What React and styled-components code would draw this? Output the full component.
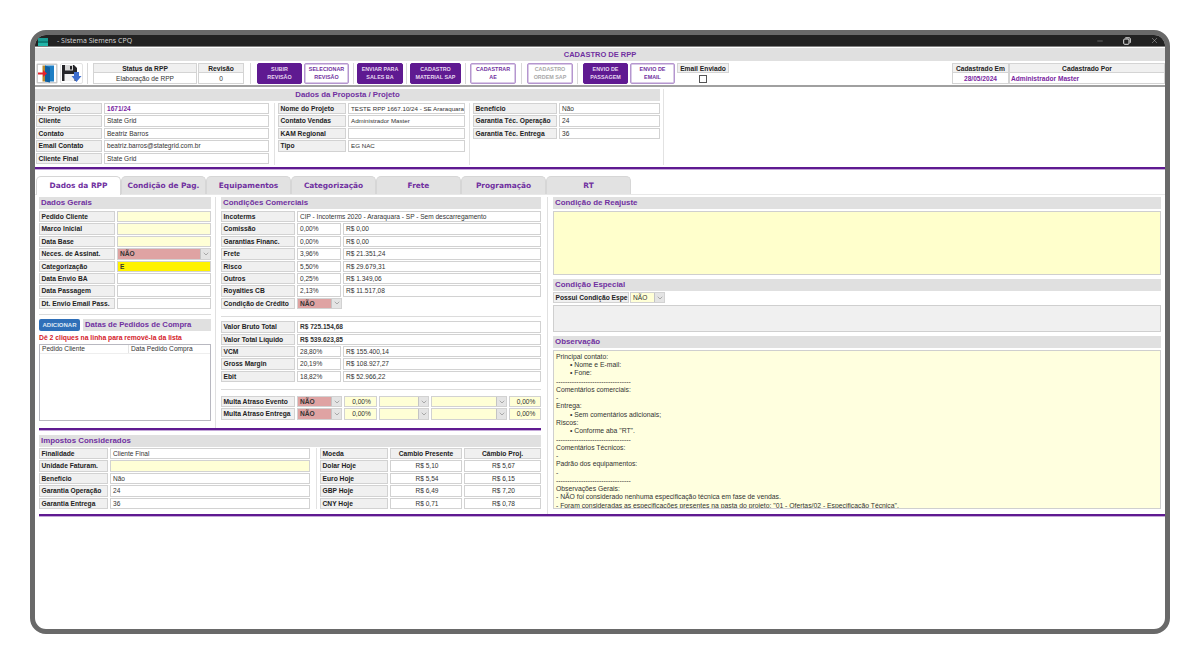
import React from 'react';
import styled, { createGlobalStyle } from 'styled-components';
import { ChevronDown, Minus, X } from 'lucide-react';

const GlobalStyle = createGlobalStyle`
  html, body {
    margin: 0;
    background: #fff;
    font-family: "Liberation Sans", Arial, sans-serif;
  }
  * { box-sizing: border-box; }
`;

const PURPLE = '#5f1a91';
const TITLE = '#7030a0';

const Page = styled.div`
  width: 1200px;
  height: 664px;
  padding: 30px;
  overflow: hidden;
`;

const Frame = styled.div`
  width: 1140px;
  height: 604px;
  border: 5px solid #696969;
  border-radius: 16px;
  overflow: hidden;
  background: #fff;
`;

const TitleBar = styled.div`
  height: 12px;
  background: #222;
  border-bottom: 1px solid #808080;
  display: flex;
  align-items: center;
  padding: 0 6px 0 3px;
  color: #d8d8d8;
  font-family: "Open Sans", sans-serif;
  font-size: 7px;
`;

const AppLogo = styled.div`
  width: 10px;
  height: 8px;
  margin-right: 9px;
  margin-top: 3px;
  background: linear-gradient(#1a9c94 0 40%, #0d7f78 40% 60%, #22b5a8 60%);
`;

const WindowControls = styled.div`
  margin-left: auto;
  display: flex;
  align-items: center;
  gap: 19px;
  color: #e4e4e4;
`;

const PageTitle = styled.div`
  height: 13px;
  margin-top: 1px;
  background: #e0e0e0;
  color: ${TITLE};
  font-size: 7.5px;
  font-weight: bold;
  text-align: center;
  line-height: 14px;
`;

const Toolbar = styled.div`
  height: 26px;
  display: flex;
  align-items: flex-start;
  padding: 2px 0 0 1px;
  border-bottom: 2px solid #a0a0a0;
`;

const IconButton = styled.div`
  width: ${(p) => p.$w}px;
  height: 21px;
  margin-right: 2px;
  border: 1px solid #e4e4e4;
  border-radius: 2px;
  display: flex;
  align-items: center;
  justify-content: center;
`;

const ToolDivider = styled.div`
  width: 1px;
  height: 21px;
  background: #d8d8d8;
  margin: 0 ${(p) => p.$r}px 0 ${(p) => p.$l}px;
`;

const InfoCell = styled.div`
  width: ${(p) => p.$w}px;
  margin-right: ${(p) => p.$mr || 0}px;
  margin-left: ${(p) => (p.$push ? 'auto' : 0)};
  flex: none;
`;

const InfoHead = styled.div`
  height: 10px;
  background: #f0f0f0;
  border: 1px solid #d4d4d4;
  font-size: 6.7px;
  font-weight: bold;
  line-height: 9px;
  text-align: center;
  color: #222;
`;

const InfoValue = styled.div`
  height: 11px;
  border: 1px solid #d4d4d4;
  border-top: 0;
  font-size: 6.6px;
  line-height: 11px;
  text-align: ${(p) => p.$align || 'center'};
  padding-left: ${(p) => (p.$align ? 1 : 0)}px;
  font-weight: ${(p) => (p.$strong ? 'bold' : 'normal')};
  color: ${(p) => (p.$strong ? '#7a1fa2' : '#333')};
`;

const CheckRow = styled.div`
  height: 11px;
  display: flex;
  align-items: center;
  justify-content: center;
`;

const CheckBox = styled.div`
  width: 8px;
  height: 8px;
  border: 1px solid #555;
  background: #fff;
`;

const ActionButton = styled.div`
  width: ${(p) => p.$w}px;
  height: 21px;
  flex: none;
  margin-right: ${(p) => p.$mr || 0}px;
  border-radius: 2px;
  border: 1px solid ${(p) => (p.$solid ? PURPLE : '#b596cf')};
  box-shadow: ${(p) => (p.$solid ? 'none' : 'inset 0 0 0 0.5px #b596cf')};
  background: ${(p) => (p.$solid ? PURPLE : '#fff')};
  color: ${(p) => (p.$solid ? '#e6d8f0' : p.$off ? '#a8a8a8' : TITLE)};
  font-size: 5.4px;
  font-weight: bold;
  line-height: 7.5px;
  text-align: center;
  display: flex;
  align-items: center;
  justify-content: center;
`;

const ProjectArea = styled.div`
  height: 80px;
  display: flex;
  padding-top: 2px;
`;

const ProjectLeft = styled.div`
  width: 625px;
  height: 76px;
`;

const Band = styled.div`
  height: 12px;
  margin-top: ${(p) => p.$mt || 0}px;
  background: #e0e0e0;
  color: ${TITLE};
  font-size: ${(p) => p.$size || 7.9}px;
  font-weight: bold;
  line-height: 12.5px;
  padding-left: ${(p) => (p.$center ? 0 : 2)}px;
  text-align: ${(p) => (p.$center ? 'center' : 'left')};
  flex: ${(p) => (p.$grow ? 1 : 'none')};
`;

const ProjectCols = styled.div`
  display: flex;
  margin-top: 2px;
  height: 62px;
`;

const Column = styled.div`
  width: ${(p) => p.$w}px;
  flex: none;
  display: flex;
  flex-direction: column;
  gap: 1px;
  ${(p) => (p.$rule ? 'border-right: 1px solid #e2e2e2;' : '')}
  ${(p) => (p.$pr ? `padding-right: ${p.$pr}px;` : '')}
  ${(p) => (p.$pl ? `padding-left: ${p.$pl}px;` : '')}
`;

const SideRule = styled.div`
  width: 1px;
  height: 76px;
  margin-left: 3px;
  background: #e2e2e2;
`;

const Row = styled.div`
  height: 11.4px;
  display: flex;
  gap: ${(p) => (p.$tight ? 1 : 2)}px;
  flex: none;
`;

const Label = styled.div`
  width: ${(p) => p.$w}px;
  flex: none;
  background: #f0f0f0;
  border: 1px solid #d2d2d2;
  font-size: 6.7px;
  font-weight: bold;
  color: #222;
  line-height: 10px;
  padding-left: ${(p) => (p.$center ? 0 : 1.5)}px;
  text-align: ${(p) => (p.$center ? 'center' : 'left')};
  white-space: nowrap;
  overflow: hidden;
`;

const Field = styled.div`
  width: ${(p) => (p.$w ? `${p.$w}px` : 'auto')};
  flex: ${(p) => (p.$w ? 'none' : 1)};
  min-width: 0;
  background: ${(p) => p.$bg || '#fff'};
  border: 1px solid #d2d2d2;
  font-size: ${(p) => p.$size || 6.55}px;
  font-weight: ${(p) => (p.$bold ? 'bold' : 'normal')};
  color: ${(p) => p.$color || '#333'};
  line-height: 10px;
  padding-left: 2px;
  text-align: ${(p) => p.$align || 'left'};
  white-space: nowrap;
  overflow: hidden;
`;

const SelectBox = styled.div`
  width: ${(p) => (p.$w ? `${p.$w}px` : 'auto')};
  flex: ${(p) => (p.$w ? 'none' : 1)};
  display: flex;
  background: ${(p) => p.$bg || '#fff'};
  border: 1px solid #d2d2d2;
  font-size: 6.6px;
  font-weight: ${(p) => (p.$bold ? 'bold' : 'normal')};
  color: #333;
  line-height: 10px;
  padding-left: 2px;
  overflow: hidden;
`;

const SelectText = styled.span`
  flex: 1;
`;

const SelectArrow = styled.span`
  width: 10px;
  flex: none;
  background: #e4e4e4;
  border-left: 1px solid #c4c4c4;
  color: #666;
  display: flex;
  align-items: center;
  justify-content: center;
`;

const PurpleRule = styled.div`
  height: 2px;
  background: ${PURPLE};
  box-shadow: 0 1px 0 #c4a8d8;
  margin-left: ${(p) => p.$ml || 0}px;
`;

const TabBar = styled.div`
  height: 26px;
  display: flex;
  align-items: flex-end;
  padding-left: 1px;
  border-bottom: 1px solid #e8e8e8;
`;

const Tab = styled.div`
  width: 85px;
  height: ${(p) => (p.$active ? 19 : 18)}px;
  margin-bottom: ${(p) => (p.$active ? -1 : 0)}px;
  background: ${(p) => (p.$active ? '#fff' : '#e2e2e2')};
  border: 1px solid #d6d6d6;
  border-bottom: 0;
  border-radius: 5px 5px 0 0;
  font-family: "DejaVu Sans", sans-serif;
  font-size: 7.4px;
  font-weight: bold;
  color: ${TITLE};
  text-align: center;
  line-height: 17px;
  position: relative;
`;

const Content = styled.div`
  display: flex;
  padding: 2px 4px 0 4px;
  height: 319px;
`;

const LeftPane = styled.div`
  width: 502px;
  flex: none;
`;

const TopSplit = styled.div`
  display: flex;
  height: 231px;
`;

const GeneralCol = styled.div`
  width: 172px;
  flex: none;
`;

const VRule = styled.div`
  width: 1px;
  flex: none;
  background: #e0e0e0;
  margin: 0 ${(p) => p.$r}px 0 ${(p) => p.$l}px;
`;

const CommercialCol = styled.div`
  width: 320px;
  flex: none;
`;

const RowStack = styled.div`
  display: flex;
  flex-direction: column;
  gap: 1px;
  margin-top: ${(p) => p.$mt || 2}px;
`;

const HRule = styled.div`
  height: 1px;
  background: #dcdcdc;
  margin: ${(p) => p.$t}px 0 ${(p) => p.$b}px;
`;

const AddRow = styled.div`
  display: flex;
  gap: 3px;
`;

const AddButton = styled.div`
  width: 41px;
  height: 12px;
  flex: none;
  background: #2f6fb8;
  color: #dfe9f5;
  border-radius: 2px;
  font-size: 6px;
  font-weight: bold;
  line-height: 12px;
  text-align: center;
`;

const Hint = styled.div`
  color: #d4202a;
  font-size: 6.8px;
  font-weight: bold;
  line-height: 8px;
  margin: 3px 0 2px;
`;

const ListBox = styled.div`
  height: 77px;
  border: 1px solid #b8b8c0;
`;

const ListHead = styled.div`
  display: flex;
  height: 9px;
  border-bottom: 1px solid #eee;
  font-size: 6.6px;
  line-height: 8px;
  color: #333;
`;

const ListCol = styled.div`
  width: ${(p) => (p.$w ? `${p.$w}px` : 'auto')};
  flex: ${(p) => (p.$w ? 'none' : 1)};
  padding-left: 2px;
  border-right: ${(p) => (p.$w ? '1px solid #e4e4e4' : '0')};
`;

const TaxGrid = styled.div`
  display: flex;
  margin-top: 1px;
`;

const RightPane = styled.div`
  width: 608px;
  flex: none;
`;

const NoteBox = styled.div`
  height: ${(p) => p.$h}px;
  margin: ${(p) => p.$mt || 2}px 0 4px;
  background: ${(p) => p.$bg};
  border: 1px solid #cfcfcf;
`;

const ObservationBox = styled.div`
  height: 159px;
  margin-top: 2px;
  padding: 1.5px 2px 0;
  background: #ffffdf;
  border: 1px solid #cfcfcf;
  font-size: 6.8px;
  line-height: 8.28px;
  color: #333;
  overflow: hidden;
  white-space: nowrap;
`;

const ObsLine = styled.div`
  height: 8.28px;
  padding-left: ${(p) => (p.$bullet ? 14 : 0)}px;
`;

const ExitIcon = () => (
  <svg width="20" height="19" viewBox="0 0 20 19">
    <rect x="0.5" y="0.5" width="19" height="18" fill="none" stroke="#999" strokeDasharray="1 1" />
    <rect x="8" y="1.5" width="9" height="16" fill="#1f7fc4" />
    <path d="M8 1.5l5 2v15l-5-1z" fill="#0f5f9f" />
    <rect x="5.5" y="1.5" width="2.5" height="16" fill="#b8892e" />
    <path d="M1 8.5h5V6l4 3.5L6 13v-2.5H1z" fill="#e5212b" />
  </svg>
);

const SaveIcon = () => (
  <svg width="21" height="19" viewBox="0 0 21 19">
    <path d="M1 1h12l3 3v13H1z" fill="#26262a" />
    <rect x="4" y="1" width="8" height="5.5" fill="#d8d8d8" />
    <rect x="9" y="2" width="2" height="3.5" fill="#26262a" />
    <rect x="3.5" y="10" width="10" height="7" fill="#f2f2f2" />
    <path d="M13 8h5v4h2.5l-5 6-5-6H13z" fill="#3f6fd0" />
  </svg>
);

const RestoreIcon = () => (
  <svg width="8" height="8" viewBox="0 0 8 8" fill="none" stroke="currentColor" strokeWidth="1">
    <rect x="0.7" y="2" width="5.3" height="5.3" rx="1" />
    <path d="M2.3 0.8h4a1 1 0 0 1 1 1v4" />
  </svg>
);

const Select = ({ children, ...props }) => (
  <SelectBox {...props}>
    <SelectText>{children}</SelectText>
    <SelectArrow>
      <ChevronDown size={8} strokeWidth={1.4} />
    </SelectArrow>
  </SelectBox>
);

const PINK = '#dfa3a3';
const CREAM = '#ffffd6';

const projectColumns = [
  {
    w: 240, label: 66, pl: 1, pr: 5, rows: [
      ['Nº Projeto', '1671/24', true],
      ['Cliente', 'State Grid'],
      ['Contato', 'Beatriz Barros'],
      ['Email Contato', 'beatriz.barros@stategrid.com.br'],
      ['Cliente Final', 'State Grid'],
    ],
  },
  {
    w: 195, label: 68, pl: 3, pr: 4, size: 6.2, rows: [
      ['Nome do Projeto', 'TESTE RPP 1667.10/24 - SE Araraquara'],
      ['Contato Vendas', 'Administrador Master'],
      ['KAM Regional', ''],
      ['Tipo', 'EG NAC'],
    ],
  },
  {
    w: 190, label: 84, pl: 3, rows: [
      ['Benefício', 'Não'],
      ['Garantia Téc. Operação', '24'],
      ['Garantia Téc. Entrega', '36'],
    ],
  },
];

const tabs = ['Dados da RPP', 'Condição de Pag.', 'Equipamentos', 'Categorização', 'Frete', 'Programação', 'RT'];

const commercialRows = [
  ['Comissão', '0,00%', 'R$ 0,00'],
  ['Garantias Financ.', '0,00%', 'R$ 0,00'],
  ['Frete', '3,96%', 'R$ 21.351,24'],
  ['Risco', '5,50%', 'R$ 29.679,31'],
  ['Outros', '0,25%', 'R$ 1.349,06'],
  ['Royalties CB', '2,13%', 'R$ 11.517,08'],
];

const marginRows = [
  ['VCM', '28,80%', 'R$ 155.400,14'],
  ['Gross Margin', '20,19%', 'R$ 108.927,27'],
  ['Ebit', '18,82%', 'R$ 52.966,22'],
];

const taxRows = [
  ['Finalidade', 'Cliente Final'],
  ['Unidade Faturam.', '', CREAM],
  ['Benefício', 'Não'],
  ['Garantia Operação', '24'],
  ['Garantia Entrega', '36'],
];

const rates = [
  ['Dolar Hoje', 'R$ 5,10', 'R$ 5,67'],
  ['Euro Hoje', 'R$ 5,54', 'R$ 6,15'],
  ['GBP Hoje', 'R$ 6,49', 'R$ 7,20'],
  ['CNY Hoje', 'R$ 0,71', 'R$ 0,78'],
];

const observation = [
  ['Principal contato:'],
  ['• Nome e E-mail:', true],
  ['• Fone:', true],
  ['---------------------------------'],
  ['Comentários comerciais:'],
  [' -'],
  ['Entrega:'],
  ['• Sem comentários adicionais;', true],
  ['Riscos:'],
  ['• Conforme aba "RT".', true],
  ['---------------------------------'],
  ['Comentários Técnicos:'],
  [' -'],
  ['Padrão dos equipamentos:'],
  ['-'],
  ['---------------------------------'],
  ['Observações Gerais:'],
  ['- NÃO foi considerado nenhuma especificação técnica em fase de vendas.'],
  ['- Foram consideradas as especificações presentes na pasta do projeto: "01 - Ofertas/02 - Especificação Técnica".'],
];

const App = () => (
  <Page>
    <GlobalStyle />
    <Frame>
      <TitleBar>
        <AppLogo />
        - Sistema Siemens CPQ
        <WindowControls>
          <Minus size={8} strokeWidth={1} />
          <RestoreIcon />
          <X size={9} strokeWidth={1} />
        </WindowControls>
      </TitleBar>
      <PageTitle>CADASTRO DE RPP</PageTitle>

      <Toolbar>
        <IconButton $w={22}><ExitIcon /></IconButton>
        <IconButton $w={23}><SaveIcon /></IconButton>
        <ToolDivider $l={2} $r={5} />
        <InfoCell $w={104} $mr={1}>
          <InfoHead>Status da RPP</InfoHead>
          <InfoValue>Elaboração de RPP</InfoValue>
        </InfoCell>
        <InfoCell $w={46}>
          <InfoHead>Revisão</InfoHead>
          <InfoValue>0</InfoValue>
        </InfoCell>
        <ToolDivider $l={6} $r={6} />
        <ActionButton $w={45} $mr={2} $solid>SUBIR<br />REVISÃO</ActionButton>
        <ActionButton $w={45}>SELECIONAR<br />REVISÃO</ActionButton>
        <ToolDivider $l={4} $r={3} />
        <ActionButton $w={46} $solid>ENVIAR PARA<br />SALES BA</ActionButton>
        <ToolDivider $l={3} $r={3} />
        <ActionButton $w={51} $solid>CADASTRO<br />MATERIAL SAP</ActionButton>
        <ToolDivider $l={4} $r={4} />
        <ActionButton $w={46}>CADASTRAR<br />AE</ActionButton>
        <ToolDivider $l={5} $r={5} />
        <ActionButton $w={46} $off>CADASTRO<br />ORDEM SAP</ActionButton>
        <ToolDivider $l={4} $r={5} />
        <ActionButton $w={45} $mr={2} $solid>ENVIO DE<br />PASSAGEM</ActionButton>
        <ActionButton $w={45} $mr={2}>ENVIO DE<br />EMAIL</ActionButton>
        <InfoCell $w={52}>
          <InfoHead>Email Enviado</InfoHead>
          <CheckRow><CheckBox /></CheckRow>
        </InfoCell>
        <InfoCell $w={57} $push>
          <InfoHead>Cadastrado Em</InfoHead>
          <InfoValue $strong>28/05/2024</InfoValue>
        </InfoCell>
        <InfoCell $w={156}>
          <InfoHead>Cadastrado Por</InfoHead>
          <InfoValue $strong $align="left">Administrador Master</InfoValue>
        </InfoCell>
      </Toolbar>

      <ProjectArea>
        <ProjectLeft>
          <Band $center $size={7.8}>Dados da Proposta / Projeto</Band>
          <ProjectCols>
            {projectColumns.map((col, i) => (
              <Column key={i} $w={col.w} $pl={col.pl} $pr={col.pr} $rule={i < 2}>
                {col.rows.map(([label, value, strong]) => (
                  <Row key={label}>
                    <Label $w={col.label}>{label}</Label>
                    <Field $size={col.size} $bold={strong} $color={strong ? '#7a1fa2' : undefined}>{value}</Field>
                  </Row>
                ))}
              </Column>
            ))}
          </ProjectCols>
        </ProjectLeft>
        <SideRule />
      </ProjectArea>
      <PurpleRule />

      <TabBar>
        {tabs.map((tab, i) => (
          <Tab key={tab} $active={i === 0}>{tab}</Tab>
        ))}
      </TabBar>

      <Content>
        <LeftPane>
          <TopSplit>
            <GeneralCol>
              <Band>Dados Gerais</Band>
              <RowStack>
                {['Pedido Cliente', 'Marco Inicial', 'Data Base'].map((label) => (
                  <Row key={label}>
                    <Label $w={76}>{label}</Label>
                    <Field $bg={CREAM} />
                  </Row>
                ))}
                <Row>
                  <Label $w={76}>Neces. de Assinat.</Label>
                  <Select $bg={PINK} $bold>NÃO</Select>
                </Row>
                <Row>
                  <Label $w={76}>Categorização</Label>
                  <Field $bg="#fff200" $bold>E</Field>
                </Row>
                {['Data Envio BA', 'Data Passagem', 'Dt. Envio Email Pass.'].map((label) => (
                  <Row key={label}>
                    <Label $w={76}>{label}</Label>
                    <Field />
                  </Row>
                ))}
              </RowStack>
              <HRule $t={5} $b={4} />
              <AddRow>
                <AddButton>ADICIONAR</AddButton>
                <Band $grow $size={7.7}>Datas de Pedidos de Compra</Band>
              </AddRow>
              <Hint>Dê 2 cliques na linha para removê-la da lista</Hint>
              <ListBox>
                <ListHead>
                  <ListCol $w={89}>Pedido Cliente</ListCol>
                  <ListCol>Data Pedido Compra</ListCol>
                </ListHead>
              </ListBox>
            </GeneralCol>

            <VRule $l={4} $r={5} />

            <CommercialCol>
              <Band>Condições Comerciais</Band>
              <RowStack>
                <Row>
                  <Label $w={74}>Incoterms</Label>
                  <Field>CIP - Incoterms 2020 - Araraquara - SP - Sem descarregamento</Field>
                </Row>
                {commercialRows.map(([label, pct, value]) => (
                  <Row key={label}>
                    <Label $w={74}>{label}</Label>
                    <Field $w={44}>{pct}</Field>
                    <Field>{value}</Field>
                  </Row>
                ))}
                <Row>
                  <Label $w={74}>Condição de Crédito</Label>
                  <Select $w={45} $bg={PINK} $bold>NÃO</Select>
                </Row>
              </RowStack>
              <HRule $t={7} $b={4} />
              <RowStack $mt={1}>
                <Row>
                  <Label $w={74}>Valor Bruto Total</Label>
                  <Field $bold>R$ 725.154,68</Field>
                </Row>
                <Row>
                  <Label $w={74}>Valor Total Líquido</Label>
                  <Field $bold>R$ 539.623,85</Field>
                </Row>
                {marginRows.map(([label, pct, value]) => (
                  <Row key={label}>
                    <Label $w={74}>{label}</Label>
                    <Field $w={44}>{pct}</Field>
                    <Field>{value}</Field>
                  </Row>
                ))}
              </RowStack>
              <HRule $t={7} $b={6} />
              <RowStack $mt={1}>
                {['Multa Atraso Evento', 'Multa Atraso Entrega'].map((label) => (
                  <Row key={label}>
                    <Label $w={74}>{label}</Label>
                    <Select $w={45} $bg={PINK} $bold>NÃO</Select>
                    <Field $w={33} $bg={CREAM} $align="center">0,00%</Field>
                    <Select $w={50} $bg={CREAM} />
                    <Select $w={76} $bg={CREAM} />
                    <Field $bg={CREAM} $align="center">0,00%</Field>
                  </Row>
                ))}
              </RowStack>
            </CommercialCol>
          </TopSplit>

          <PurpleRule />
          <Band $mt={5}>Impostos Considerados</Band>
          <TaxGrid>
            <Column $w={278} $rule $pr={6}>
              {taxRows.map(([label, value, bg]) => (
                <Row key={label}>
                  <Label $w={69}>{label}</Label>
                  <Field $bg={bg}>{value}</Field>
                </Row>
              ))}
            </Column>
            <Column $w={224} $pl={3}>
              <Row>
                <Label $w={68}>Moeda</Label>
                <Label $w={72} $center>Cambio Presente</Label>
                <Label $w={77} $center>Câmbio Proj.</Label>
              </Row>
              {rates.map(([label, now, proj]) => (
                <Row key={label}>
                  <Label $w={68}>{label}</Label>
                  <Field $w={72} $align="center">{now}</Field>
                  <Field $w={77} $align="center">{proj}</Field>
                </Row>
              ))}
            </Column>
          </TaxGrid>
        </LeftPane>

        <VRule $l={6} $r={5} />

        <RightPane>
          <Band>Condição de Reajuste</Band>
          <NoteBox $h={64} $bg="#ffffcc" />
          <Band>Condição Especial</Band>
          <RowStack $mt={1}>
            <Row $tight>
              <Label $w={76}>Possui Condição Espe</Label>
              <Select $w={35} $bg={CREAM}>NÃO</Select>
            </Row>
          </RowStack>
          <NoteBox $h={27} $mt={2} $bg="#f0f0f0" />
          <Band>Observação</Band>
          <ObservationBox>
            {observation.map(([text, bullet], i) => (
              <ObsLine key={i} $bullet={bullet}>{text}</ObsLine>
            ))}
          </ObservationBox>
        </RightPane>
      </Content>

      <PurpleRule $ml={4} />
    </Frame>
  </Page>
);

export default App;
